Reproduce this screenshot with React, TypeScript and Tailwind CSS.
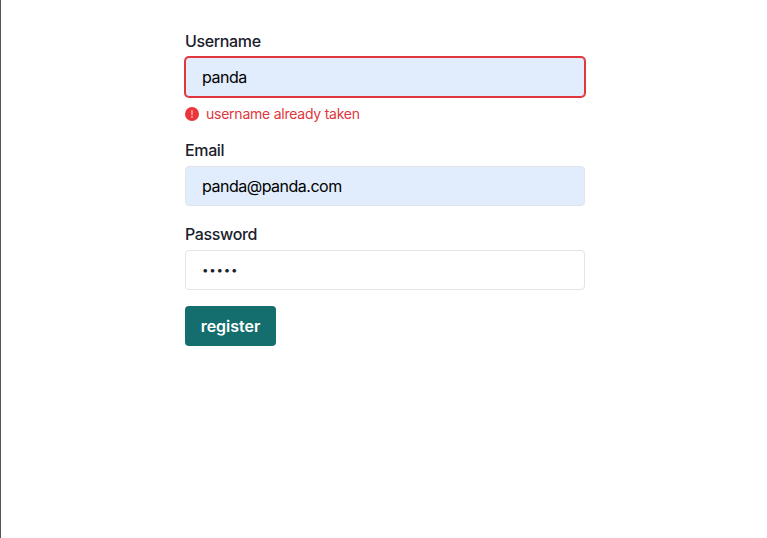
import React from "react";

type FieldProps = {
  id: string;
  label: string;
  value: string;
  type?: string;
  filled?: boolean;
  error?: string;
};

function ErrorIcon() {
  return (
    <svg viewBox="0 0 14 14" className="mr-[7px] size-3.5 shrink-0" aria-hidden="true">
      <circle cx="7" cy="7" r="7" fill="#eb353b" />
      <path d="M7 3.6V7.6" stroke="#fbc4c6" strokeWidth="1.2" strokeLinecap="round" />
      <circle cx="7" cy="9.9" r="0.85" fill="#fbc4c6" />
    </svg>
  );
}

function Field({ id, label, value, type = "text", filled = false, error }: FieldProps) {
  return (
    <div>
      <label htmlFor={id} className="mb-1 block text-base font-medium tracking-[-0.36px]">
        {label}
      </label>
      <input
        id={id}
        type={type}
        defaultValue={value}
        className={`block h-10 w-full rounded border px-4 outline-none ${
          type === "password" ? "pb-px text-[11.5px] tracking-[0.8px]" : "text-base tracking-[-0.5px]"
        } ${error ? "border-[#e0373d] shadow-[0_0_0_1px_#e0373d]" : "border-[#dfe5e9]"} ${
          filled ? "bg-[#e1edfc] text-black" : "bg-white"
        }`}
      />
      {error && (
        <div className="mt-2 flex items-center text-sm leading-[18px] tracking-[-0.24px] text-[#e0373d]">
          <ErrorIcon />
          {error}
        </div>
      )}
    </div>
  );
}

export default function App() {
  return (
    <div className="h-screen border-l border-[#555] bg-white pt-[29px] font-['Inter',sans-serif] text-[#1a202c]">
      <form className="ml-[184px] w-[400px]" onSubmit={(e) => e.preventDefault()}>
        <Field id="username" label="Username" value="panda" filled error="username already taken" />
        <div className="mt-[15px]">
          <Field id="email" label="Email" value="panda@panda.com" filled />
        </div>
        <div className="mt-4">
          <Field id="password" label="Password" value="panda" type="password" />
        </div>
        <button type="submit" className="mt-4 h-10 w-[91px] rounded bg-[#146e6d] text-base font-[560] text-white">
          register
        </button>
      </form>
    </div>
  );
}
